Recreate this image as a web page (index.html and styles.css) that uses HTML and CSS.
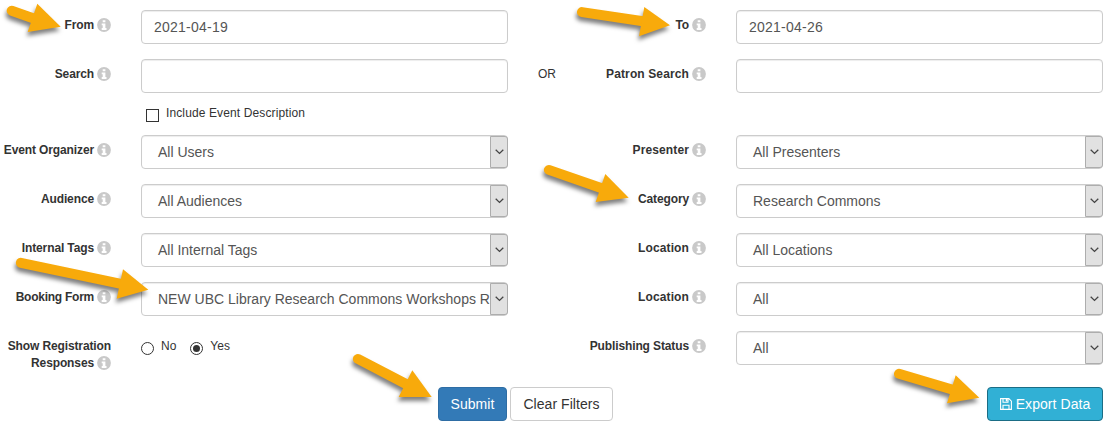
FILE: index.html
```html
<!DOCTYPE html>
<html lang="en">
<head>
<meta charset="utf-8">
<title>Event Filters</title>
<link rel="stylesheet" href="styles.css">
</head>
<body>
<svg class="defs" aria-hidden="true">
  <symbol id="info" viewBox="0 0 14 14"><circle cx="7" cy="7" r="6.9" fill="#c9c9c9"/><path d="M5.7 2.2h2.7v2.1H5.7zM4.7 5.4h3.7v4.6h1.1v1.9H4.7V10h1V7.3h-1z" fill="#fff"/></symbol>
  <symbol id="chevron" viewBox="0 0 9 6"><path d="M.7 .8L4.5 4.4 8.3 .8" fill="none" stroke="#444" stroke-width="1.3"/></symbol>
</svg>
<form class="filters">
  <div class="grid">
    <label class="label"><span>From</span><svg class="info"><use href="#info"/></svg></label>
    <div class="control input">2021-04-19</div>
    <span></span>
    <label class="label"><span>To</span><svg class="info"><use href="#info"/></svg></label>
    <div class="control input">2021-04-26</div>

    <label class="label"><span>Search</span><svg class="info"><use href="#info"/></svg></label>
    <div class="control input"></div>
    <span class="or">OR</span>
    <label class="label wide"><span>Patron Search</span><svg class="info"><use href="#info"/></svg></label>
    <div class="control input"></div>

    <div class="check-row"><span class="checkbox"></span><span class="check-text">Include Event Description</span></div>

    <label class="label"><span>Event Organizer</span><svg class="info"><use href="#info"/></svg></label>
    <div class="control select"><span class="value">All Users</span><span class="drop"><svg><use href="#chevron"/></svg></span></div>
    <span></span>
    <label class="label wide"><span>Presenter</span><svg class="info"><use href="#info"/></svg></label>
    <div class="control select"><span class="value">All Presenters</span><span class="drop"><svg><use href="#chevron"/></svg></span></div>

    <label class="label"><span>Audience</span><svg class="info"><use href="#info"/></svg></label>
    <div class="control select"><span class="value">All Audiences</span><span class="drop"><svg><use href="#chevron"/></svg></span></div>
    <span></span>
    <label class="label"><span>Category</span><svg class="info"><use href="#info"/></svg></label>
    <div class="control select"><span class="value">Research Commons</span><span class="drop"><svg><use href="#chevron"/></svg></span></div>

    <label class="label"><span>Internal Tags</span><svg class="info"><use href="#info"/></svg></label>
    <div class="control select"><span class="value">All Internal Tags</span><span class="drop"><svg><use href="#chevron"/></svg></span></div>
    <span></span>
    <label class="label wide"><span>Location</span><svg class="info"><use href="#info"/></svg></label>
    <div class="control select"><span class="value">All Locations</span><span class="drop"><svg><use href="#chevron"/></svg></span></div>

    <label class="label tight"><span>Booking Form</span><svg class="info"><use href="#info"/></svg></label>
    <div class="control select"><span class="value">NEW UBC Library Research Commons Workshops R</span><span class="drop"><svg><use href="#chevron"/></svg></span></div>
    <span></span>
    <label class="label wide"><span>Location</span><svg class="info"><use href="#info"/></svg></label>
    <div class="control select"><span class="value">All</span><span class="drop"><svg><use href="#chevron"/></svg></span></div>

    <div class="label-stack">
      <span>Show Registration</span>
      <div class="label-line"><span>Responses</span><svg class="info"><use href="#info"/></svg></div>
    </div>
    <div class="radios">
      <span class="radio"></span><span class="radio-text">No</span>
      <span class="radio checked"></span><span class="radio-text">Yes</span>
    </div>
    <span></span>
    <label class="label"><span>Publishing Status</span><svg class="info"><use href="#info"/></svg></label>
    <div class="control select"><span class="value">All</span><span class="drop"><svg><use href="#chevron"/></svg></span></div>
  </div>

  <div class="actions">
    <button type="button" class="btn submit">Submit</button>
    <button type="button" class="btn clear">Clear Filters</button>
    <button type="button" class="btn export"><svg class="save" viewBox="0 0 12 12"><path d="M.6 .6h8.2l2.6 2.6v8.2H.6zM3 .8v3.4h5V.8M3 11.2V7.2h6v4" fill="none" stroke="#fff" stroke-width="1.1"/><path d="M5.8 1h1.6v2.4H5.8z" fill="#fff"/></svg>Export Data</button>
  </div>
</form>
<svg class="arrows" viewBox="0 0 1114 433" aria-hidden="true">
  <g><path class="shaft" d="M11.7 10.7L33 18.3"/><path d="M60.7 26.7L37.3 3.7 27.7 32z"/></g>
  <g><path class="shaft" d="M582 12.1L643 21.3"/><path d="M670 25.3L644.3 7 639 36.3z"/></g>
  <g><path class="shaft" d="M20.9 262.8L121 283.8"/><path d="M148.3 289.7L123 269.3 116.7 298.7z"/></g>
  <g><path class="shaft" d="M548.9 169.9L601 188"/><path d="M628.7 197.7L605.3 174 595.7 202z"/></g>
  <g><path class="shaft" d="M357.9 358.9L406 384"/><path d="M431.7 397L412.3 370.3 398.7 397z"/></g>
  <g><path class="shaft" d="M899 373.8L952 389.5"/><path d="M979.3 397.7L955.7 375.3 947 403.3z"/></g>
</svg>
</body>
</html>
```
FILE: styles.css
```css
* { box-sizing: border-box; }
body {
  margin: 0;
  width: 1114px;
  height: 433px;
  overflow: hidden;
  position: relative;
  background: #fff;
  color: #333;
  font-family: "Liberation Sans", Arial, sans-serif;
  font-size: 12px;
}
.defs { display: none; }
.filters { padding: 10px 11px 0 0; }
.grid {
  display: grid;
  grid-template-columns: 111px 397px 78px 120px 397px;
  grid-template-rows: 34px 34px 12px repeat(5, 34px);
  row-gap: 15px;
}
.label, .label-line {
  display: flex;
  justify-content: flex-end;
  gap: 3px;
  font-weight: bold;
  line-height: 17px;
  white-space: nowrap;
}
.label { padding-top: 7px; letter-spacing: -.12px; }
.label.wide { letter-spacing: .12px; }
.label.tight { letter-spacing: -.25px; }
.info { width: 14px; height: 14px; margin-top: 1px; flex: none; }
.label-stack {
  padding-top: 7px;
  text-align: right;
  font-weight: bold;
  line-height: 17px;
  letter-spacing: -.12px;
  white-space: nowrap;
}
.control {
  width: 367px;
  height: 34px;
  margin-left: 30px;
  border: 1px solid #ccc;
  border-radius: 4px;
  box-shadow: inset 0 1px 1px rgba(0, 0, 0, .075);
  color: #555;
  font-size: 14px;
  line-height: 32px;
  white-space: nowrap;
}
.input { padding-left: 12px; letter-spacing: .24px; }
.select { display: flex; }
.value { flex: 1; min-width: 0; padding-left: 16px; }
.drop {
  display: flex;
  flex: none;
  align-items: center;
  justify-content: center;
  width: 18px;
  margin-right: -1px;
  background: #e1e1e1;
  border: 1px solid #adadad;
  border-radius: 0 3px 3px 0;
}
.drop svg { width: 9px; height: 6px; }
.or { padding: 7px 0 0 30px; line-height: 17px; }
.check-row {
  grid-column: 1 / -1;
  display: flex;
  padding-left: 146px;
}
.checkbox { width: 13px; height: 13px; margin-top: 1px; border: 1px solid #333; }
.check-text { margin: -3px 0 0 7px; line-height: 17px; letter-spacing: .12px; }
.radios { display: flex; padding-left: 30px; }
.radio {
  display: flex;
  width: 13px;
  height: 13px;
  margin-top: 11px;
  border: 1px solid #333;
  border-radius: 50%;
}
.radio.checked::after {
  content: "";
  width: 7px;
  height: 7px;
  margin: 2px;
  border-radius: 50%;
  background: #333;
}
.radio-text { margin: 7px 14px 0 7px; line-height: 17px; }
.actions { display: flex; gap: 3px; padding: 22px 0 0 438px; }
.btn {
  height: 34px;
  padding: 0;
  border: 1px solid #ccc;
  border-radius: 4px;
  background: #fff;
  color: #333;
  font: 14px "Liberation Sans", Arial, sans-serif;
  letter-spacing: .06px;
}
.submit { width: 69px; background: #337ab7; border-color: #2e6da4; color: #fff; }
.clear { width: 103px; }
.export {
  display: flex;
  align-items: center;
  justify-content: center;
  gap: 4px;
  width: 116px;
  margin-left: auto;
  background: #31b0d5;
  border-color: #1b6d85;
  color: #fff;
}
.save { width: 12px; height: 12px; }
.arrows { position: absolute; left: 0; top: 0; width: 1114px; height: 433px; pointer-events: none; }
.arrows g { fill: #f8aa0b; filter: drop-shadow(-1px 4px 2px rgba(0, 0, 0, .5)); }
.shaft { stroke: #f8aa0b; stroke-width: 10; stroke-linecap: round; }
```
